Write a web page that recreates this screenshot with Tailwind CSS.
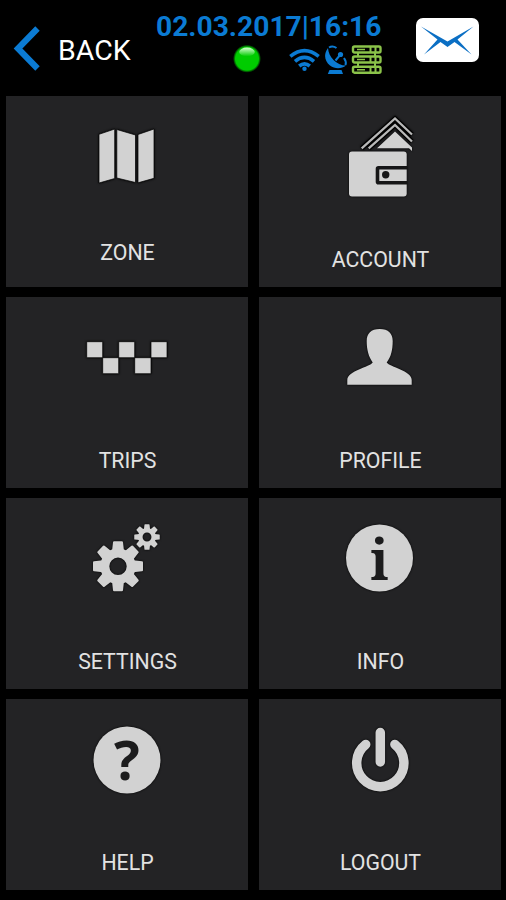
<!DOCTYPE html>
<html lang="en">
<head>
  <meta charset="UTF-8" />
  <meta name="viewport" content="width=device-width, initial-scale=1.0"/>
  <title>Driver menu</title>
  <script src="https://cdn.jsdelivr.net/npm/@tailwindcss/browser@4"></script>
</head>
<body class="bg-black h-[900px] w-[506px] overflow-hidden font-[Roboto,sans-serif]">
  <header class="flex h-24">
    <button class="flex items-start w-[156px] pl-3 pt-6">
      <svg class="w-7 h-12 shrink-0" viewBox="0 0 28 48" fill="none" stroke="#0b7bd3" stroke-width="6.2"><path d="M25.5 4.5 6 24.5 25.5 44.5"/></svg>
      <span class="ml-[18px] mt-[7px] text-[28.5px] leading-10 text-white">BACK</span>
    </button>

    <div class="w-[226px] pt-[11px]">
      <div id="clock" class="text-[28.2px] leading-8 font-bold text-[#0b7bd3] whitespace-nowrap">02.03.2017|16:16</div>
      <div class="flex justify-end items-start">
        <svg class="w-7 h-8 mr-[28px]" viewBox="0 0 28 32">
          <defs>
            <linearGradient id="shine" x2="0" y2="1"><stop offset="0" stop-color="#d5ffd0"/><stop offset="1" stop-color="#00cc00"/></linearGradient>
            <radialGradient id="led"><stop offset=".82" stop-color="#00cc00"/><stop offset="1" stop-color="#00cc00" stop-opacity="0"/></radialGradient>
          </defs>
          <circle cx="14" cy="15.700" r="14" fill="url(#led)"/>
          <ellipse cx="14" cy="9" rx="7.800" ry="4.400" fill="url(#shine)"/>
        </svg>
        <svg class="w-8 h-8" viewBox="0 0 32 32" fill="none" stroke="#0b7bd3" stroke-width="3.600">
          <path d="M1.300 13.400Q15.500 2 29.700 13.400M6 18.400Q15.500 10.500 25 18.400M10.200 23Q15.500 18.600 20.800 23"/>
          <circle cx="15.500" cy="25.800" r="2.200" fill="#0b7bd3" stroke="none"/>
        </svg>
        <svg class="w-6 h-8 ml-[3px]" viewBox="0 0 24 32" fill="#0b7bd3">
          <path d="M4 5C-.5 11 .3 18 6 22.500c5 3.800 11.500 3.500 16 0-5 0-9-2-12.500-5.500S4.500 10 4 5Z"/>
          <path d="M5.500 27h12l1.500 4H3.800Z"/>
          <path d="m11.500 17.500 5-6M5 4.500c2-1.200 5-1.200 7.500.5M20 15c1.700 2.500 2.200 5 1.500 7" fill="none" stroke="#0b7bd3" stroke-width="2"/>
          <circle cx="16.500" cy="11.500" r="2.600"/>
        </svg>
        <svg class="w-[31px] h-8 ml-[3px]" viewBox="0 0 31 32" fill="none" stroke="#8bc34a" stroke-width="2.400">
          <rect x="2" y="3.500" width="27.500" height="6" rx="1.500"/>
          <rect x="2" y="13.500" width="27.500" height="6" rx="1.500"/>
          <rect x="2" y="23.700" width="27.500" height="6" rx="1.500"/>
          <path d="M6 6.500h8M6 16.500h8M6 26.700h8" stroke-width="1.500"/>
          <path d="M19.500 3v7M24.500 3v7M19.500 13v7M24.500 13v7M19.500 23v7M24.500 23v7M7 10v3M24 10v3M7 20v3M24 20v3" stroke-width="2"/>
        </svg>
      </div>
    </div>

    <button class="ml-[34px] mt-[18px] flex w-[63px] h-11 rounded-[7px] bg-white">
      <svg class="w-full h-full" viewBox="0 0 63 44" fill="#0b6fc4">
        <path d="M5 8.500 31.500 23.500 57.500 8.500 41.500 21.500 55.500 36.500 38.500 24 31.500 29 24.500 24 8 36.500 21.500 21.500Z"/>
      </svg>
    </button>
  </header>

  <main class="grid grid-cols-[242px_242px] auto-rows-[191px] gap-x-[11px] gap-y-2.5 pl-1.5 text-[21.3px] leading-6 text-[#e2e2e2]">
    <a class="flex flex-col items-center bg-[#232325] pt-3.5">
      <svg class="w-[100px] h-[100px] drop-shadow-[0_0_1px_#000]" viewBox="0 0 100 100" fill="#d2d2d2" stroke="#000" stroke-width=".7">
        <path d="M22 24.300 37.700 19v49.500L22 73ZM39.800 19.500l18.700 5.500v47.500L39.800 68ZM61 24.500 77 19v49.300l-16 4.500Z"/>
      </svg>
      <span class="mt-[31px] pl-px">ZONE</span>
    </a>

    <a class="flex flex-col items-center bg-[#232325] pt-3.5">
      <svg class="w-[100px] h-[100px] drop-shadow-[0_0_1px_#000]" viewBox="0 0 100 100" fill="#d2d2d2">
        <path d="M31.700 38.300 65 8.500 82 24.500M38.700 38.300 65 15 82 31.500" fill="none" stroke="#000" stroke-width="4.500"/>
        <path d="M31.700 38.300 65 8.500 82 24.500M38.700 38.300 65 15 82 31.500" fill="none" stroke="#b8b8b8" stroke-width="2.300"/>
        <path d="M47 38.300 65 21.500 82 37.500V41L79 38.300Z"/>
        <rect x="19" y="41.500" width="57.700" height="45" rx="3"/>
        <path d="M77 57.800H48.500a1 1 0 0 0-1 1v13a1 1 0 0 0 1 1H77" fill="none" stroke="#161617" stroke-width="3.600"/>
        <circle cx="55.700" cy="64.700" r="3.700" fill="#161617"/>
      </svg>
      <span class="mt-[38px] pl-px">ACCOUNT</span>
    </a>

    <a class="flex flex-col items-center bg-[#232325] pt-3.5">
      <svg class="w-[100px] h-[100px] drop-shadow-[0_0_1px_#000]" viewBox="0 0 100 100" fill="#d2d2d2" stroke="#000" stroke-width=".7">
        <path d="M9.700 30.700h16v16h-16ZM41.700 30.700h16v16h-16ZM74 30.700h16v16H74ZM25.700 46.700h16v16h-16ZM57.700 46.700H74v16H57.700Z"/>
      </svg>
      <span class="mt-[38px] pl-px">TRIPS</span>
    </a>

    <a class="flex flex-col items-center bg-[#232325] pt-3.5">
      <svg class="w-[100px] h-[100px] drop-shadow-[0_0_1px_#000]" viewBox="0 0 100 100" fill="#d2d2d2">
        <path d="M49.700 18C41 18 36.700 22.500 36.700 30c0 9 2 16 6 21.500C40 56 17.300 59.500 17.300 69v4.700h64.400V69c0-9.500-22-13-25-17.500 4.300-5.500 6-12.500 6-21.500C62.700 22.500 58.400 18 49.700 18Z"/>
      </svg>
      <span class="mt-[38px] pl-px">PROFILE</span>
    </a>

    <a class="flex flex-col items-center bg-[#232325] pt-3.5">
      <svg class="w-[100px] h-[100px] drop-shadow-[0_0_1px_#000]" viewBox="0 0 100 100" fill="#d2d2d2">
        <defs>
          <path id="tooth" d="M-6-15-5-24Q-4.900-25-3.900-25H3.900Q4.900-25 5-24L6-15Z"/>
          <g id="gear">
            <circle r="13.200" fill="none" stroke="#d2d2d2" stroke-width="9"/>
            <use href="#tooth"/>
            <use href="#tooth" transform="rotate(45)"/>
            <use href="#tooth" transform="rotate(90)"/>
            <use href="#tooth" transform="rotate(135)"/>
            <use href="#tooth" transform="rotate(180)"/>
            <use href="#tooth" transform="rotate(225)"/>
            <use href="#tooth" transform="rotate(270)"/>
            <use href="#tooth" transform="rotate(315)"/>
          </g>
        </defs>
        <use href="#gear" transform="translate(41 54.300)"/>
        <use href="#gear" transform="translate(70 25) scale(.51)"/>
      </svg>
      <span class="mt-[38px] pl-px">SETTINGS</span>
    </a>

    <a class="flex flex-col items-center bg-[#232325] pt-3.5">
      <svg class="w-[100px] h-[100px] drop-shadow-[0_0_1px_#000]" viewBox="0 0 100 100">
        <circle cx="49.500" cy="46" r="33.500" fill="#d2d2d2"/>
        <text x="49.500" y="68" text-anchor="middle" class="font-['Noto_Serif','DejaVu_Serif',serif] font-bold text-[57px]" fill="#1c1c1d" transform="translate(4.900 0) scale(.9 1)">i</text>
      </svg>
      <span class="mt-[38px] pl-px">INFO</span>
    </a>

    <a class="flex flex-col items-center bg-[#232325] pt-3.5">
      <svg class="w-[100px] h-[100px] drop-shadow-[0_0_1px_#000]" viewBox="0 0 100 100">
        <circle cx="50" cy="47" r="33.500" fill="#d2d2d2"/>
        <text x="50" y="67.300" text-anchor="middle" class="font-['Open_Sans',sans-serif] font-bold text-[54px]" fill="#1c1c1d">?</text>
      </svg>
      <span class="mt-[38px] pl-px">HELP</span>
    </a>

    <a class="flex flex-col items-center bg-[#232325] pt-3.5">
      <svg class="w-[100px] h-[100px] drop-shadow-[0_0_1px_#000]" viewBox="0 0 100 100" fill="none" stroke="#d2d2d2" stroke-width="9.500" stroke-linecap="round">
        <path d="M35.700 31.500a23.600 23.600 0 1 0 29.200 0M50.300 19.500v29.500"/>
      </svg>
      <span class="mt-[38px] pl-px">LOGOUT</span>
    </a>
  </main>
</body>
</html>
